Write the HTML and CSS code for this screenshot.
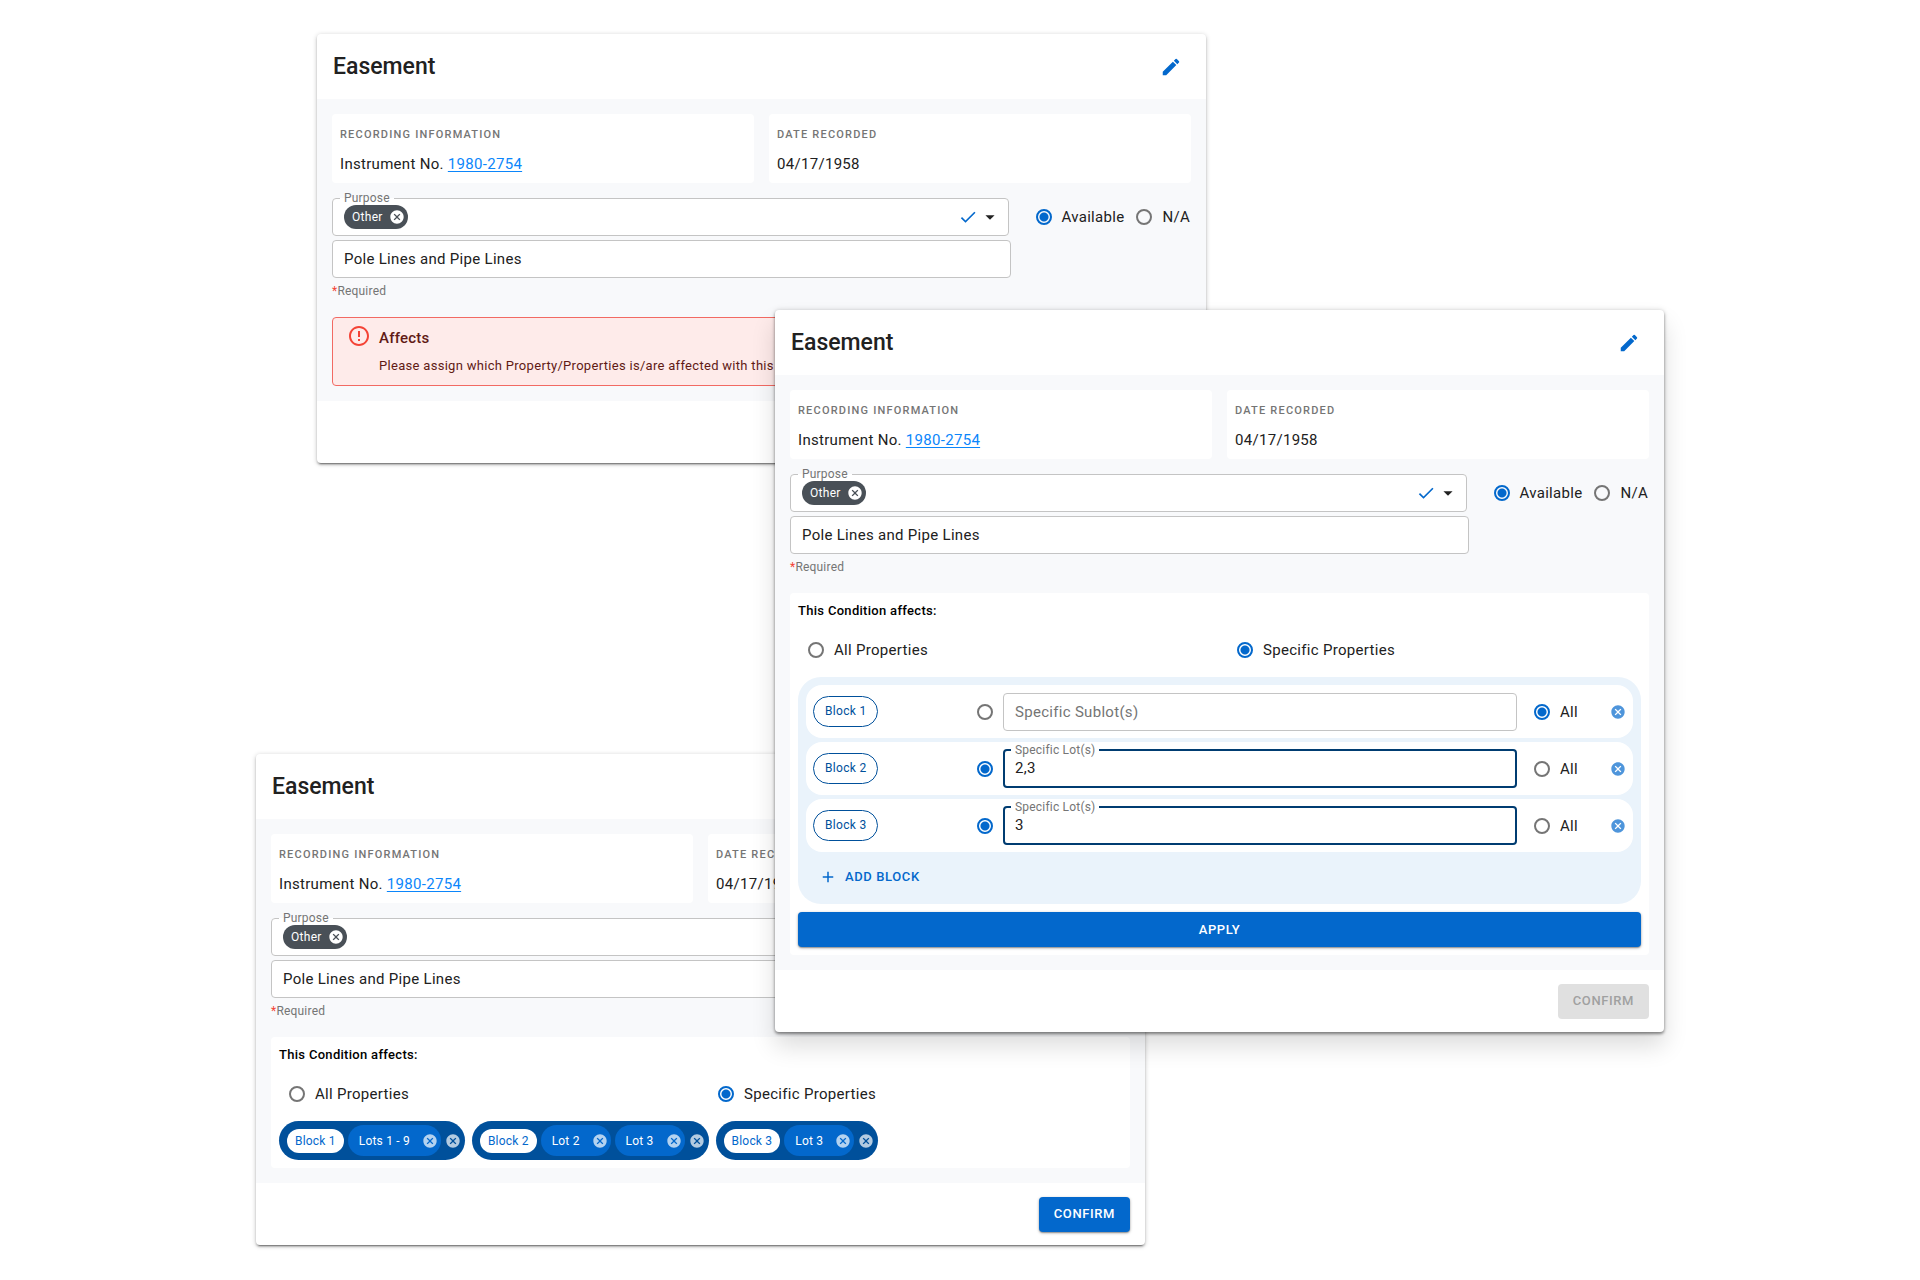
FILE: index.html
```html
<!DOCTYPE html>
<html lang="en">
<head>
<meta charset="utf-8">
<meta name="viewport" content="width=device-width, initial-scale=1">
<title>Easement</title>
<link rel="stylesheet" href="styles.css">
</head>
<body>
<svg class="sprite" aria-hidden="true">
  <symbol id="edit" viewBox="0 0 24 24"><path d="M3 17.25V21h3.75L17.81 9.94l-3.75-3.75L3 17.25zM20.71 7.04c.39-.39.39-1.02 0-1.41l-2.34-2.34a.9959.9959 0 0 0-1.41 0l-1.83 1.83 3.75 3.75 1.83-1.83z"/></symbol>
  <symbol id="cancel" viewBox="0 0 24 24"><path d="M12 2C6.47 2 2 6.47 2 12s4.47 10 10 10 10-4.47 10-10S17.53 2 12 2zm5 13.59L15.59 17 12 13.41 8.41 17 7 15.59 10.59 12 7 8.41 8.41 7 12 10.59 15.59 7 17 8.41 13.41 12 17 15.59z"/></symbol>
  <symbol id="check" viewBox="0 0 24 24"><path d="M9 16.17 4.83 12l-1.42 1.41L9 19 21 7l-1.41-1.41z"/></symbol>
  <symbol id="caret" viewBox="0 0 24 24"><path d="m7 10 5 5 5-5z"/></symbol>
  <symbol id="plus" viewBox="0 0 24 24"><path d="M19 13h-6v6h-2v-6H5v-2h6V5h2v6h6v2z"/></symbol>
  <symbol id="error" viewBox="0 0 24 24"><path d="M11 15h2v2h-2zm0-8h2v6h-2zm.99-5C6.47 2 2 6.48 2 12s4.47 10 9.99 10C17.52 22 22 17.52 22 12S17.52 2 11.99 2zM12 20c-4.42 0-8-3.58-8-8s3.58-8 8-8 8 3.58 8 8-3.58 8-8 8z"/></symbol>
</svg>

<main class="stage">
  <section class="card card-first">
    <header class="card-head">
      <h2 class="card-title">Easement</h2>
      <button class="icon-button" type="button" aria-label="Edit"><svg class="icon-edit"><use href="#edit"/></svg></button>
    </header>
    <div class="card-body">
      <div class="facts">
        <div class="fact"><h3 class="fact-label">Recording information</h3><p class="fact-value">Instrument No. <a class="link" href="#instrument">1980-2754</a></p></div>
        <div class="fact"><h3 class="fact-label">Date recorded</h3><p class="fact-value">04/17/1958</p></div>
      </div>
      <div class="purpose">
        <div class="purpose-fields">
          <fieldset class="outline outline-purpose">
            <legend class="legend">Purpose</legend>
            <div class="picker">
              <span class="tag">Other<button class="icon-button" type="button" aria-label="Remove Other"><svg class="icon-small"><use href="#cancel"/></svg></button></span>
              <select class="picker-select" aria-label="Purpose"><option value=""></option></select>
              <svg class="icon-check"><use href="#check"/></svg>
              <svg class="icon-caret"><use href="#caret"/></svg>
            </div>
          </fieldset>
          <input class="text-box" type="text" aria-label="Other purpose" value="Pole Lines and Pipe Lines">
        </div>
        <div class="choices">
          <label class="choice"><input class="radio" type="radio" name="status-1" checked>Available</label>
          <label class="choice"><input class="radio" type="radio" name="status-1">N/A</label>
        </div>
      </div>
      <p class="helper"><span class="asterisk">*</span>Required</p>
      <div class="alert" role="alert">
        <svg class="icon-error"><use href="#error"/></svg>
        <div>
          <h3 class="alert-title">Affects</h3>
          <p class="alert-text">Please assign which Property/Properties is/are affected with this</p>
        </div>
      </div>
    </div>
    <footer class="card-foot"></footer>
  </section>

  <section class="card card-third">
    <header class="card-head">
      <h2 class="card-title">Easement</h2>
      <button class="icon-button" type="button" aria-label="Edit"><svg class="icon-edit"><use href="#edit"/></svg></button>
    </header>
    <div class="card-body">
      <div class="facts">
        <div class="fact"><h3 class="fact-label">Recording information</h3><p class="fact-value">Instrument No. <a class="link" href="#instrument">1980-2754</a></p></div>
        <div class="fact"><h3 class="fact-label">Date recorded</h3><p class="fact-value">04/17/1958</p></div>
      </div>
      <div class="purpose">
        <div class="purpose-fields">
          <fieldset class="outline outline-purpose">
            <legend class="legend">Purpose</legend>
            <div class="picker">
              <span class="tag">Other<button class="icon-button" type="button" aria-label="Remove Other"><svg class="icon-small"><use href="#cancel"/></svg></button></span>
              <select class="picker-select" aria-label="Purpose"><option value=""></option></select>
              <svg class="icon-check"><use href="#check"/></svg>
              <svg class="icon-caret"><use href="#caret"/></svg>
            </div>
          </fieldset>
          <input class="text-box" type="text" aria-label="Other purpose" value="Pole Lines and Pipe Lines">
        </div>
        <div class="choices">
          <label class="choice"><input class="radio" type="radio" name="status-3" checked>Available</label>
          <label class="choice"><input class="radio" type="radio" name="status-3">N/A</label>
        </div>
      </div>
      <p class="helper"><span class="asterisk">*</span>Required</p>
      <div class="panel">
        <h3 class="panel-title">This Condition affects:</h3>
        <div class="scope">
          <label class="choice"><input class="radio" type="radio" name="scope-3">All Properties</label>
          <label class="choice"><input class="radio" type="radio" name="scope-3" checked>Specific Properties</label>
        </div>
        <div class="groups">
          <div class="group">
            <span class="group-name">Block 1</span>
            <span class="lot">Lots 1 - 9<button class="icon-button" type="button" aria-label="Remove Lots 1 - 9"><svg class="icon-small"><use href="#cancel"/></svg></button></span>
            <button class="icon-button" type="button" aria-label="Remove Block 1"><svg class="icon-small"><use href="#cancel"/></svg></button>
          </div>
          <div class="group">
            <span class="group-name">Block 2</span>
            <span class="lot">Lot 2<button class="icon-button" type="button" aria-label="Remove Lot 2"><svg class="icon-small"><use href="#cancel"/></svg></button></span>
            <span class="lot">Lot 3<button class="icon-button" type="button" aria-label="Remove Lot 3"><svg class="icon-small"><use href="#cancel"/></svg></button></span>
            <button class="icon-button" type="button" aria-label="Remove Block 2"><svg class="icon-small"><use href="#cancel"/></svg></button>
          </div>
          <div class="group">
            <span class="group-name">Block 3</span>
            <span class="lot">Lot 3<button class="icon-button" type="button" aria-label="Remove Lot 3"><svg class="icon-small"><use href="#cancel"/></svg></button></span>
            <button class="icon-button" type="button" aria-label="Remove Block 3"><svg class="icon-small"><use href="#cancel"/></svg></button>
          </div>
        </div>
      </div>
    </div>
    <footer class="card-foot"><button class="button" type="button">Confirm</button></footer>
  </section>

  <section class="card card-second">
    <header class="card-head">
      <h2 class="card-title">Easement</h2>
      <button class="icon-button" type="button" aria-label="Edit"><svg class="icon-edit"><use href="#edit"/></svg></button>
    </header>
    <div class="card-body">
      <div class="facts">
        <div class="fact"><h3 class="fact-label">Recording information</h3><p class="fact-value">Instrument No. <a class="link" href="#instrument">1980-2754</a></p></div>
        <div class="fact"><h3 class="fact-label">Date recorded</h3><p class="fact-value">04/17/1958</p></div>
      </div>
      <div class="purpose">
        <div class="purpose-fields">
          <fieldset class="outline outline-purpose">
            <legend class="legend">Purpose</legend>
            <div class="picker">
              <span class="tag">Other<button class="icon-button" type="button" aria-label="Remove Other"><svg class="icon-small"><use href="#cancel"/></svg></button></span>
              <select class="picker-select" aria-label="Purpose"><option value=""></option></select>
              <svg class="icon-check"><use href="#check"/></svg>
              <svg class="icon-caret"><use href="#caret"/></svg>
            </div>
          </fieldset>
          <input class="text-box" type="text" aria-label="Other purpose" value="Pole Lines and Pipe Lines">
        </div>
        <div class="choices">
          <label class="choice"><input class="radio" type="radio" name="status-2" checked>Available</label>
          <label class="choice"><input class="radio" type="radio" name="status-2">N/A</label>
        </div>
      </div>
      <p class="helper"><span class="asterisk">*</span>Required</p>
      <div class="panel">
        <h3 class="panel-title">This Condition affects:</h3>
        <div class="scope">
          <label class="choice"><input class="radio" type="radio" name="scope-2">All Properties</label>
          <label class="choice"><input class="radio" type="radio" name="scope-2" checked>Specific Properties</label>
        </div>
        <div class="blocks">
          <div class="block">
            <span class="block-name">Block 1</span>
            <input class="radio" type="radio" name="block-1" aria-label="Specific sublots of Block 1">
            <input class="text-box" type="text" aria-label="Specific Sublot(s)" placeholder="Specific Sublot(s)">
            <label class="choice block-all"><input class="radio" type="radio" name="block-1" checked>All</label>
            <button class="icon-button block-remove" type="button" aria-label="Remove Block 1"><svg class="icon-small"><use href="#cancel"/></svg></button>
          </div>
          <div class="block">
            <span class="block-name">Block 2</span>
            <input class="radio" type="radio" name="block-2" aria-label="Specific lots of Block 2" checked>
            <fieldset class="outline outline-active">
              <legend class="legend"><label for="lots-2">Specific Lot(s)</label></legend>
              <input class="outline-input" id="lots-2" type="text" value="2,3">
            </fieldset>
            <label class="choice block-all"><input class="radio" type="radio" name="block-2">All</label>
            <button class="icon-button block-remove" type="button" aria-label="Remove Block 2"><svg class="icon-small"><use href="#cancel"/></svg></button>
          </div>
          <div class="block">
            <span class="block-name">Block 3</span>
            <input class="radio" type="radio" name="block-3" aria-label="Specific lots of Block 3" checked>
            <fieldset class="outline outline-active">
              <legend class="legend"><label for="lots-3">Specific Lot(s)</label></legend>
              <input class="outline-input" id="lots-3" type="text" value="3">
            </fieldset>
            <label class="choice block-all"><input class="radio" type="radio" name="block-3">All</label>
            <button class="icon-button block-remove" type="button" aria-label="Remove Block 3"><svg class="icon-small"><use href="#cancel"/></svg></button>
          </div>
          <button class="add-block" type="button"><svg class="icon-plus"><use href="#plus"/></svg>Add block</button>
        </div>
        <button class="button button-apply" type="button">Apply</button>
      </div>
    </div>
    <footer class="card-foot"><button class="button" type="button" disabled>Confirm</button></footer>
  </section>
</main>
</body>
</html>
```
FILE: styles.css
```css
:root {
  --blue: #0368cc;
  --blue-dark: #00509b;
  --navy: #003c71;
  --text: #212121;
  --muted: #757575;
  --line: #c4c4c4;
}

* { box-sizing: border-box; }

body {
  margin: 0;
  background: #fff;
  color: var(--text);
  font: 15px/24px Roboto, "Liberation Sans", sans-serif;
  letter-spacing: 0.3px;
}

h2, h3, p { margin: 0; }

button, input, select { font: inherit; letter-spacing: inherit; color: inherit; }

svg { display: block; fill: currentColor; }

.sprite { display: none; }

/* Overlapping cards share the tracks of a single row */
.stage {
  display: grid;
  grid-template-columns: minmax(0, 61fr) minmax(0, 458fr) minmax(0, 370fr) minmax(0, 61fr) minmax(0, 458fr);
  align-items: start;
  max-width: 1408px;
  margin: 0 auto;
  padding: 34px 0;
}

.card {
  grid-row: 1;
  background: #fff;
  border-radius: 4px;
  box-shadow: 0 3px 1px -2px rgba(0, 0, 0, .3), 0 2px 2px rgba(0, 0, 0, .2), 0 1px 5px rgba(0, 0, 0, .22);
}

.card-first { grid-column: 2 / 5; }

.card-third { grid-column: 1 / 4; margin-top: 720px; }

.card-second {
  grid-column: 3 / 6;
  margin-top: 276px;
  box-shadow: 0 2px 3px rgba(0, 0, 0, .4), 0 0 5px rgba(0, 0, 0, .16), 0 14px 24px rgba(0, 0, 0, .14);
}

.card-head {
  display: flex;
  align-items: center;
  justify-content: space-between;
  height: 65px;
  padding: 0 24px 0 16px;
}

.card-title { font-size: 23px; line-height: 30px; font-weight: 500; letter-spacing: 0; }

.card-body { padding: 15px; background: #f8f9fb; }

.card-foot {
  display: flex;
  align-items: center;
  justify-content: flex-end;
  height: 62px;
  padding: 0 15px;
}

.icon-button {
  display: flex;
  padding: 0;
  border: 0;
  background: none;
  cursor: pointer;
}

.card-head .icon-button { color: var(--blue); }

.icon-edit, .icon-caret { width: 22px; height: 22px; }
.icon-check { width: 20px; height: 20px; color: var(--blue); }
.icon-small { width: 16px; height: 16px; }
.icon-error { width: 24px; height: 24px; color: #f44336; }
.icon-plus { width: 18px; height: 18px; }

.facts { display: grid; grid-template-columns: 1fr 1fr; gap: 15px; }

.fact { padding: 6px 8px 5px; background: #fff; border-radius: 4px; }

.fact-label {
  color: var(--muted);
  font-size: 11px;
  line-height: 30px;
  font-weight: 500;
  letter-spacing: 1.2px;
  text-transform: uppercase;
}

.fact-value { line-height: 28px; }

.link { color: #0b86fb; text-underline-offset: 2px; }

.purpose { display: flex; gap: 25px; margin-top: 8px; }

.purpose-fields { flex: 1; min-width: 0; }

.outline {
  min-width: 0;
  margin: 0;
  padding: 0 7px;
  border: 1px solid var(--line);
  border-radius: 4px;
  background: #fff;
}

.outline-purpose { margin: 0 2px 4px 0; }

.outline-active { padding: 0 6px; border: 2px solid var(--navy); }

.legend {
  padding: 0 4px;
  color: var(--muted);
  font-size: 12px;
  line-height: 14px;
  letter-spacing: 0.2px;
}

.picker { display: flex; align-items: center; gap: 1px; height: 30px; padding: 0 0 6px 4px; }

.picker-select {
  flex: 1;
  min-width: 0;
  height: 24px;
  border: 0;
  background: none;
  appearance: none;
}

.tag {
  display: flex;
  align-items: center;
  gap: 6px;
  height: 24px;
  padding: 0 3px 0 8px;
  border-radius: 12px;
  background: #495057;
  color: #fff;
  font-size: 12px;
}

.text-box {
  display: block;
  width: 100%;
  height: 38px;
  padding: 0 11px;
  border: 1px solid var(--line);
  border-radius: 4px;
  background: #fff;
}

.text-box::placeholder { color: var(--muted); opacity: 1; }

.outline-input {
  display: block;
  width: 100%;
  height: 29px;
  padding: 0 4px 7px;
  border: 0;
  background: none;
}

.choices { display: flex; gap: 12px; height: 24px; margin-top: 14px; padding-right: 1px; }

.choice { display: flex; align-items: center; gap: 10px; white-space: nowrap; }

.radio {
  flex: none;
  width: 16px;
  height: 16px;
  margin: 0;
  border: 2px solid var(--muted);
  border-radius: 50%;
  appearance: none;
}

.radio:checked {
  border-color: var(--blue);
  background: radial-gradient(circle, var(--blue) 4px, transparent 5px);
}

.helper { margin: 5px 0 18px; color: var(--muted); font-size: 12px; line-height: 16px; letter-spacing: 0.2px; }

.asterisk { color: #f44336; }

.alert {
  display: flex;
  gap: 8px;
  padding: 6px 14px;
  border: 1px solid #f26a63;
  border-radius: 4px;
  background: #feebea;
  color: #611a15;
}

.alert-title { font-size: 15px; line-height: 28px; font-weight: 500; letter-spacing: 0.2px; }

.alert-text { font-size: 13px; line-height: 27px; }

.panel { padding: 8px; background: #fff; border-radius: 4px; }

.panel-title { color: #000; font-size: 13px; line-height: 20px; font-weight: 500; }

.scope {
  display: grid;
  grid-template-columns: 1fr 1fr;
  gap: 25px;
  margin: 17px 0 15px;
  padding-left: 10px;
}

.groups { display: flex; flex-wrap: wrap; gap: 7px; }

.group {
  display: flex;
  align-items: center;
  gap: 4px;
  height: 39px;
  padding: 0 4px 0 8px;
  border-radius: 20px;
  background: var(--blue-dark);
  color: #fff;
  font-size: 12px;
  letter-spacing: 0.2px;
}

.group .icon-button { color: rgba(255, 255, 255, .7); }

.group-name {
  padding: 0 8px;
  border-radius: 12px;
  background: #fff;
  color: var(--blue);
}

.lot {
  display: flex;
  align-items: center;
  gap: 12px;
  height: 31px;
  padding: 0 3px 0 11px;
  border-radius: 16px;
  background: var(--blue);
}

.blocks {
  display: flex;
  flex-direction: column;
  gap: 4px;
  padding: 8px 8px 10px;
  border-radius: 23px;
  background: #eaf3fb;
}

.block {
  display: grid;
  grid-template-columns: 154px 16px minmax(0, 1fr) auto auto;
  column-gap: 10px;
  align-items: center;
  height: 53px;
  padding: 0 7px;
  border-radius: 16px;
  background: #fff;
}

/* The label sits on the border, so the box reaches higher than its outline */
.block .outline { margin-bottom: 7px; align-self: end; }

.block-name {
  justify-self: start;
  height: 31px;
  padding: 0 11px;
  border: 1px solid var(--blue-dark);
  border-radius: 16px;
  color: var(--blue-dark);
  font-size: 12px;
  line-height: 29px;
}

.block-all { margin-left: 7px; }

.block-remove { margin-left: 22px; color: rgba(3, 104, 204, .7); }

.add-block {
  display: flex;
  align-items: center;
  align-self: flex-start;
  gap: 8px;
  height: 34px;
  margin-top: 4px;
  padding: 0 13px;
  border: 0;
  background: none;
  color: var(--blue);
  font-size: 13px;
  font-weight: 500;
  letter-spacing: 0.6px;
  text-transform: uppercase;
}

.button {
  height: 35px;
  padding: 0 15px;
  border: 0;
  border-radius: 4px;
  background: var(--blue);
  box-shadow: 0 1px 3px rgba(0, 0, 0, .35), 0 1px 1px rgba(0, 0, 0, .2);
  color: #fff;
  font-size: 13px;
  font-weight: 500;
  letter-spacing: 0.6px;
  text-transform: uppercase;
}

.button:disabled { background: #e0e0e0; box-shadow: none; color: #a0a0a0; }

.button-apply { display: block; width: 100%; margin-top: 8px; }
```
